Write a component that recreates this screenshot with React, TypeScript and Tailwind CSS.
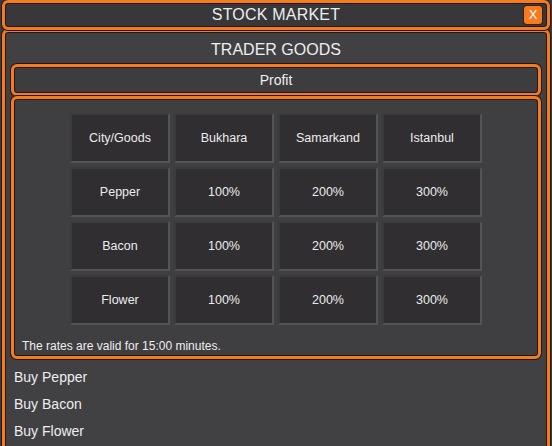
import React from 'react';

const cities = ['Bukhara', 'Samarkand', 'Istanbul'];
const goods = ['Pepper', 'Bacon', 'Flower'];
const rates = ['100%', '200%', '300%'];

const frame =
  'border-[3px] border-[#f47b1f] shadow-[0_0_0_1px_#241812,inset_0_0_0_1px_#241812]';

function Cell({ children }: { children: React.ReactNode }) {
  return (
    <div className="flex h-[50px] items-center justify-center border-2 border-[#3b3a3d] border-b-[#545357] border-r-[#545357] bg-[#302e31] text-[12.5px] text-[#ececec]">
      {children}
    </div>
  );
}

export default function App() {
  return (
    <div
      className="h-[446px] w-[552px] overflow-hidden bg-[#3b3a3d] px-[2px] text-[#eeeeee]"
      style={{ fontFamily: '"Liberation Sans", Arial, sans-serif' }}
    >
      <header className={`relative flex h-[30px] items-center justify-center rounded-[6px] bg-[#38373a] ${frame}`}>
        <span className="text-[16px] tracking-[0.2px]">STOCK MARKET</span>
        <button
          type="button"
          className="absolute right-[5px] top-[3px] flex h-[18px] w-[18px] items-center justify-center rounded-[3px] bg-[#f47b1f] text-[13px] text-white shadow-[0_0_0_1px_#3a2210]"
        >
          X
        </button>
      </header>

      <section className={`mt-[-1px] h-[440px] rounded-[6px] bg-[#414043] px-[6px] ${frame}`}>
        <h1 className="pt-[8px] text-center text-[16px] leading-[20px]">TRADER GOODS</h1>

        <div className={`mt-[4px] flex h-[32px] items-center justify-center rounded-[6px] bg-[#3d3c3f] text-[14px] ${frame}`}>
          Profit
        </div>

        <div className={`flex h-[263px] flex-col rounded-[6px] bg-[#3f3e41] ${frame}`}>
          <div className="mx-auto mt-[14px] grid w-[412px] grid-cols-4 gap-[4px]">
            <Cell>City/Goods</Cell>
            {cities.map((c) => (
              <Cell key={c}>{c}</Cell>
            ))}
            {goods.map((g) => (
              <React.Fragment key={g}>
                <Cell>{g}</Cell>
                {rates.map((r) => (
                  <Cell key={r}>{r}</Cell>
                ))}
              </React.Fragment>
            ))}
          </div>
          <p className="mt-[12px] pl-[8px] text-[12px]">The rates are valid for 15:00 minutes.</p>
        </div>

        <ul className="mt-[9px] ml-[3px] flex flex-col gap-[9px] text-[14px] leading-[18px]">
          <li>Buy Pepper</li>
          <li>Buy Bacon</li>
          <li>Buy Flower</li>
        </ul>
      </section>
    </div>
  );
}
